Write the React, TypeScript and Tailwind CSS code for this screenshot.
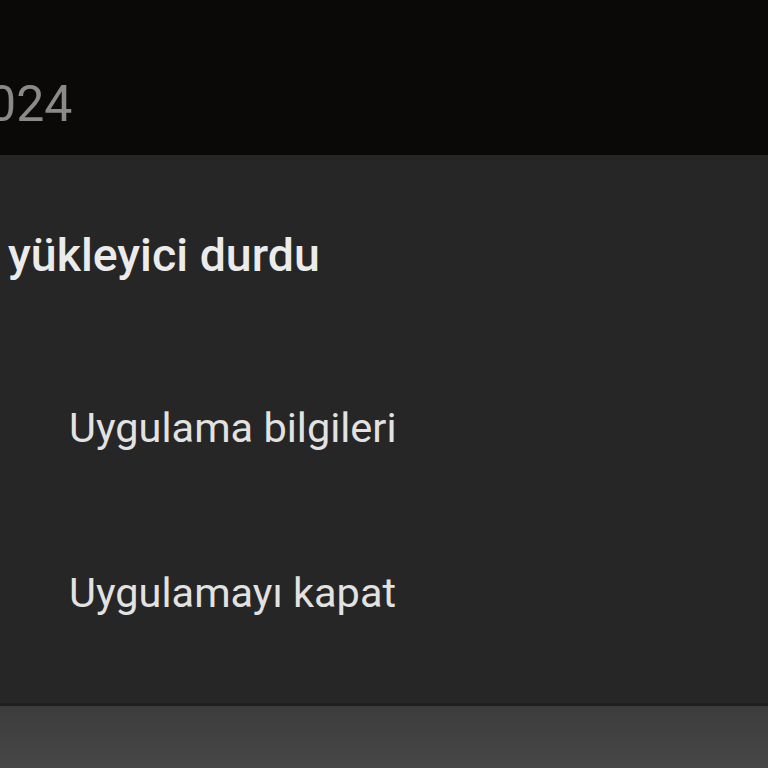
export default function App() {
  return (
    <div
      className="w-[768px] h-[768px] overflow-hidden flex flex-col bg-[#454545]"
      style={{ fontFamily: "Roboto, 'Noto Sans', sans-serif" }}
    >
      {/* status / notification strip behind the dialog */}
      <div className="h-[155px] shrink-0 bg-[#0b0808] flex items-center pt-[52px]">
        <span className="-ml-[40px] text-[50px] leading-none text-[#8a8a8a]">
          2024
        </span>
      </div>

      {/* crash dialog */}
      <div className="h-[548px] shrink-0 bg-[#262626] flex flex-col">
        <div className="h-[190px] flex items-center pl-[8px] pt-[10px]">
          <h1 className="text-[46.5px] font-medium leading-none text-[#ebebeb]">
            yükleyici durdu
          </h1>
        </div>
        <DialogItem label="Uygulama bilgileri" />
        <DialogItem label="Uygulamayı kapat" />
      </div>

      <div className="flex-1 bg-gradient-to-b from-[#3c3c3c] to-[#474747] border-t-[3px] border-[#1e1e1e]" />
    </div>
  );
}

function DialogItem({ label }: { label: string }) {
  return (
    <div className="h-[165px] flex items-center pl-[69px]">
      <span className="text-[41.5px] leading-none text-[#e2e2e2]">{label}</span>
    </div>
  );
}
